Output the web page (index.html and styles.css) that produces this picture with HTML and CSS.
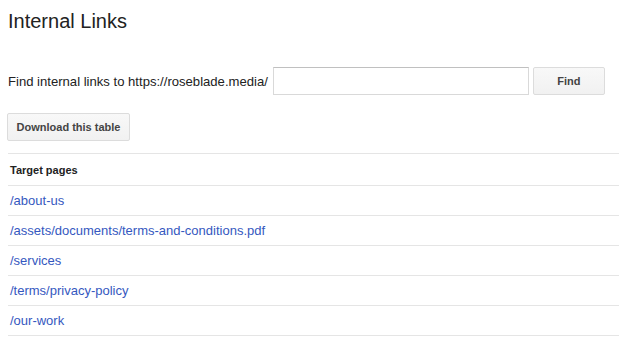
FILE: index.html
```html
<!DOCTYPE html>
<html lang="en">
<head>
    <meta charset="UTF-8">
    <title>Internal Links</title>
    <link rel="stylesheet" href="styles.css">
</head>
<body>
    <h1 class="page-title">Internal Links</h1>

    <form class="find-form">
        <label for="target" class="find-label">Find internal links to https://roseblade.media/</label>
        <input type="text" id="target" class="find-input">
        <button type="button" class="btn btn-find">Find</button>
    </form>

    <button type="button" class="btn btn-download">Download this table</button>

    <table class="links-table">
        <thead>
            <tr><th>Target pages</th></tr>
        </thead>
        <tbody>
            <tr><td><a href="#">/about-us</a></td></tr>
            <tr><td><a href="#">/assets/documents/terms-and-conditions.pdf</a></td></tr>
            <tr><td><a href="#">/services</a></td></tr>
            <tr><td><a href="#">/terms/privacy-policy</a></td></tr>
            <tr><td><a href="#">/our-work</a></td></tr>
        </tbody>
    </table>
</body>
</html>
```

FILE: styles.css
```css
* { margin: 0; padding: 0; box-sizing: border-box; }
body {
    font-family: "Liberation Sans", Arial, sans-serif;
    background: #fff; color: #222;
    padding: 8px 0 0 8px; overflow: hidden;
}
.page-title { font-size: 20px; font-weight: normal; color: #222; line-height: 26px; margin-bottom: 33px; }

.find-form { display: flex; align-items: center; height: 28px; margin-bottom: 18px; }
.find-label { font-size: 13.1px; color: #222; margin-right: 5px; white-space: nowrap; flex-shrink: 0; }
.find-input {
    width: 256px; height: 28px; border: 1px solid #d9d9d9; border-top-color: #c0c0c0;
    font-size: 13px; padding: 0 6px; margin-right: 4px; outline: none; flex-shrink: 0;
}
.btn {
    height: 28px; padding: 0 8px; border: 1px solid #dcdcdc; border-radius: 2px;
    background: linear-gradient(#f8f8f8, #f1f1f1); color: #444;
    font-family: inherit; font-size: 11px; font-weight: bold; cursor: pointer;
}
.btn-find { width: 72px; flex-shrink: 0; }
.btn-download { width: 123px; margin-left: -1px; display: block; margin-bottom: 12px; }

.links-table { width: calc(100% + 8px); border-collapse: collapse; }
.links-table th, .links-table td {
    text-align: left; padding: 0 2px; border-top: 1px solid #e5e5e5;
}
.links-table tbody tr:last-child td { border-bottom: 1px solid #e5e5e5; }
.links-table th { height: 32px; font-size: 11px; font-weight: bold; color: #222; }
.links-table td { height: 30px; font-size: 13px; }
.links-table a { color: #3558c0; text-decoration: none; }
```
